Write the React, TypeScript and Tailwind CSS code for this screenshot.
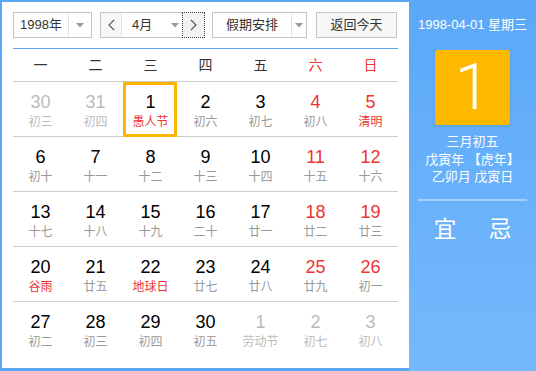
import React from 'react';

type Day = { n: number; sub: string; other?: boolean; red?: boolean; subRed?: boolean; sel?: boolean };

const weeks: Day[][] = [
  [
    { n: 30, sub: '初三', other: true },
    { n: 31, sub: '初四', other: true },
    { n: 1, sub: '愚人节', subRed: true, sel: true },
    { n: 2, sub: '初六' },
    { n: 3, sub: '初七' },
    { n: 4, sub: '初八', red: true },
    { n: 5, sub: '清明', red: true, subRed: true },
  ],
  [
    { n: 6, sub: '初十' },
    { n: 7, sub: '十一' },
    { n: 8, sub: '十二' },
    { n: 9, sub: '十三' },
    { n: 10, sub: '十四' },
    { n: 11, sub: '十五', red: true },
    { n: 12, sub: '十六', red: true },
  ],
  [
    { n: 13, sub: '十七' },
    { n: 14, sub: '十八' },
    { n: 15, sub: '十九' },
    { n: 16, sub: '二十' },
    { n: 17, sub: '廿一' },
    { n: 18, sub: '廿二', red: true },
    { n: 19, sub: '廿三', red: true },
  ],
  [
    { n: 20, sub: '谷雨', subRed: true },
    { n: 21, sub: '廿五' },
    { n: 22, sub: '地球日', subRed: true },
    { n: 23, sub: '廿七' },
    { n: 24, sub: '廿八' },
    { n: 25, sub: '廿九', red: true },
    { n: 26, sub: '初一', red: true },
  ],
  [
    { n: 27, sub: '初二' },
    { n: 28, sub: '初三' },
    { n: 29, sub: '初四' },
    { n: 30, sub: '初五' },
    { n: 1, sub: '劳动节', other: true },
    { n: 2, sub: '初七', other: true },
    { n: 3, sub: '初八', other: true },
  ],
];

const weekdays = ['一', '二', '三', '四', '五', '六', '日'];

function Caret() {
  return (
    <svg width="8" height="5" viewBox="0 0 8 5">
      <path d="M0 0 L8 0 L4 4.5 Z" fill="#9a9a9a" />
    </svg>
  );
}

function Chevron({ dir }: { dir: 'l' | 'r' }) {
  return (
    <svg width="7" height="12" viewBox="0 0 7 12">
      <path d={dir === 'l' ? 'M6 1 L1 6 L6 11' : 'M1 1 L6 6 L1 11'} fill="none" stroke="#555" strokeWidth="1.1" />
    </svg>
  );
}

export default function App() {
  return (
    <div
      className="w-[536px] h-[371px] flex bg-[#5ba8f8] text-[#333]"
      style={{ fontFamily: '"Liberation Sans", "Noto Sans CJK SC", sans-serif' }}
    >
      {/* calendar panel */}
      <div className="w-[407px] mt-[2px] mb-[3px] ml-[2px] bg-white pt-[10px] px-[11px]">
        {/* controls */}
        <div className="flex items-center h-[26px] text-[13px]">
          <div className="flex w-[79px] h-[26px] border border-[#c4c4c4]">
            <div className="w-[54px] flex items-center justify-center">1998年</div>
            <div className="flex-1 flex items-center justify-center border-l border-[#e2e2e2]">
              <Caret />
            </div>
          </div>
          <div className="flex ml-[8px] h-[26px] border border-[#c4c4c4]">
            <div className="w-[21px] flex items-center justify-center bg-[#f7f7f7] border-r border-[#e2e2e2]">
              <Chevron dir="l" />
            </div>
            <div className="w-[60px] flex items-center pl-[10px]">
              <span>4月</span>
              <span className="ml-[19px] flex"><Caret /></span>
            </div>
            <div className="w-[23px] -my-px -mr-px flex items-center justify-center bg-[#f2f2f2] border border-dotted border-[#444]">
              <Chevron dir="r" />
            </div>
          </div>
          <div className="flex ml-[7px] w-[95px] h-[26px] border border-[#c4c4c4]">
            <div className="w-[78px] flex items-center justify-center">假期安排</div>
            <div className="flex-1 flex items-center justify-center border-l border-[#e2e2e2]">
              <Caret />
            </div>
          </div>
          <div className="ml-[9px] w-[81px] h-[26px] flex items-center justify-center border border-[#c4c4c4] bg-[#f7f7f7]">
            返回今天
          </div>
        </div>

        <div className="mt-[10px] h-px bg-[#5aa6f7]" />

        {/* weekday header */}
        <div className="grid grid-cols-7 h-[33px] border-b border-[#cccccc] text-[14px]">
          {weekdays.map((w, i) => (
            <div key={w} className={`flex items-center justify-center ${i >= 5 ? 'text-[#ee3333]' : 'text-[#333]'}`}>
              {w}
            </div>
          ))}
        </div>

        {/* days */}
        {weeks.map((week, ri) => (
          <div key={ri} className={`grid grid-cols-7 h-[55px] ${ri < 4 ? 'border-b border-[#cccccc]' : ''}`}>
            {week.map((d, ci) => {
              const numColor = d.other ? 'text-[#bbbbbb]' : d.red ? 'text-[#ee3333]' : 'text-black';
              const subColor = d.other ? 'text-[#bbbbbb]' : d.subRed ? 'text-[#ee3333]' : 'text-[#999999]';
              return (
                <div key={ci} className="relative flex flex-col items-center pt-[10px]">
                  {d.sel && (
                    <div className="absolute left-0 top-0 w-[54px] h-[55px] border-[3px] border-[#ffb400]" />
                  )}
                  <div className={`text-[18px] leading-[20px] ${numColor}`}>{d.n}</div>
                  <div className={`text-[12px] leading-[16px] mt-[2px] ${subColor}`}>{d.sub}</div>
                </div>
              );
            })}
          </div>
        ))}
      </div>

      {/* side panel */}
      <div className="flex-1 bg-gradient-to-b from-[#5ba8f8] to-[#75b9fc] flex flex-col items-center text-white">
        <div className="mt-[16px] text-[13px] leading-[18px]">1998-04-01 星期三</div>
        <div className="mt-[16px] w-[75px] h-[75px] rounded-[3px] bg-[#ffb800] flex items-center justify-center shadow-[0_1px_3px_rgba(0,0,0,0.12)]">
          <span className="text-[64px] leading-none font-light" style={{ fontFamily: 'Roboto, "Liberation Sans", sans-serif' }}>
            1
          </span>
        </div>
        <div className="mt-[8px] text-[13px] leading-[17.5px] text-center">
          <div>三月初五</div>
          <div>戊寅年 【虎年】</div>
          <div>乙卯月 戊寅日</div>
        </div>
        <div className="mt-[13px] w-[109px] h-[2px] bg-[#a6d0fc]" />
        <div className="mt-[15px] flex gap-[32px] text-[23px] leading-[26px]">
          <span>宜</span>
          <span>忌</span>
        </div>
      </div>
    </div>
  );
}
